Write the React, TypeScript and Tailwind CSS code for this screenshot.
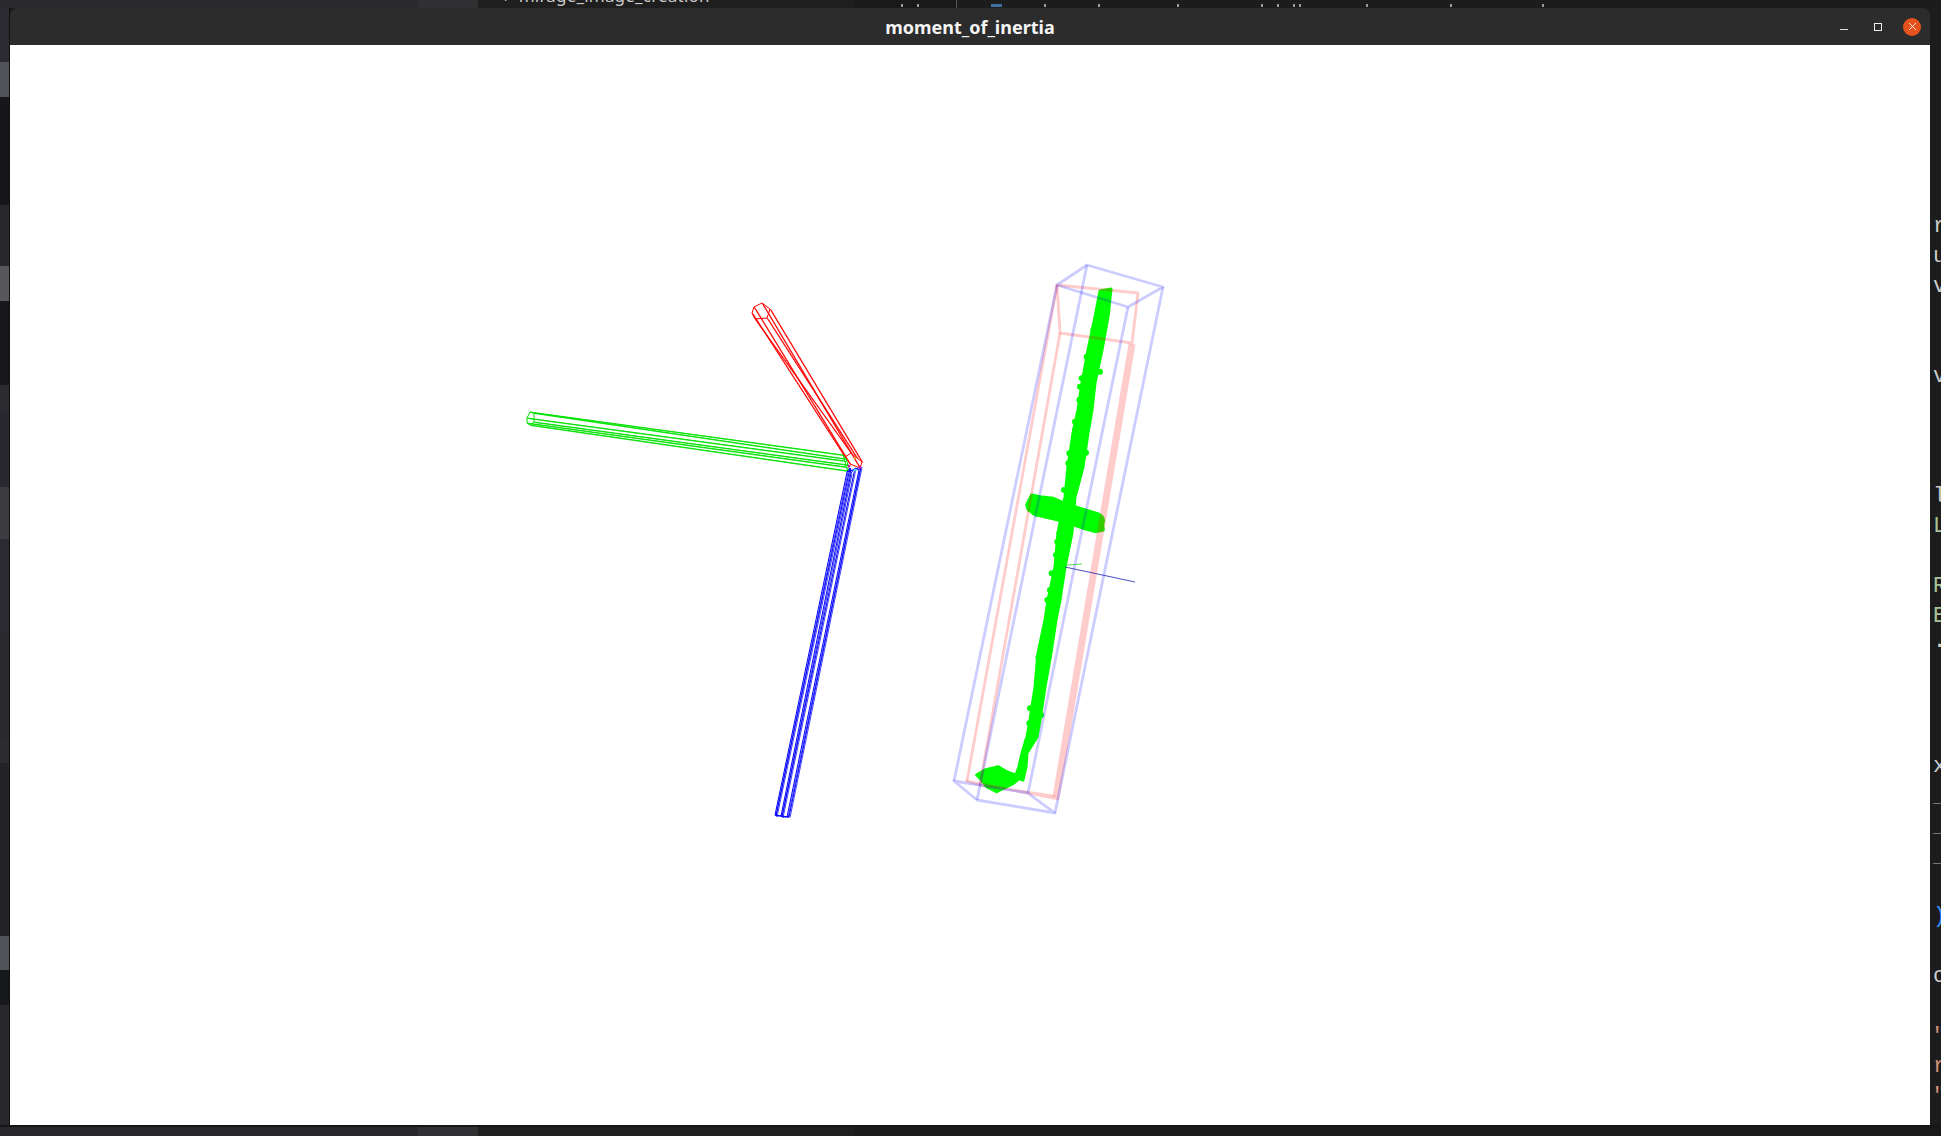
import { X } from "lucide-react";

type P = [number, number];
const at = (pts: P[], ox: number, oy: number): P[] => pts.map(([x, y]) => [x / 3 + ox, y / 3 + oy]);
const str = (pts: P[]) => pts.map((p) => p.join(",")).join(" ");

const redFar: P[] = [[752, 313], [754, 307], [762, 303], [770, 309], [767, 318], [755, 319]];
const redBase: P[] = [[845, 457], [850, 464], [860, 468], [862, 462], [857, 458], [851, 453]];
const greenFar: P[] = [[527, 418], [530, 412], [534, 413], [534, 422], [530, 425], [527, 423]];
const greenBase: P[] = [[845, 461], [843, 455], [846, 459], [848, 465], [848, 471], [846, 467]];
const blueFar: P[] = [[775, 815], [776, 816], [781, 816], [782, 817], [787, 817], [789, 817]];
const blueBase: P[] = [[847, 472], [850, 468], [851, 473], [855, 468], [859, 470], [861, 467]];

const leftEdge: P[] = [[1100, 291], [1095, 317], [1088, 350], [1082, 383], [1078, 410], [1073, 433], [1068, 467], [1065, 497], [1058, 533], [1055, 567], [1048, 600], [1045, 620], [1038, 653], [1035, 687], [1030, 720], [1027, 737], [1022, 753], [1019, 767], [1015, 777]];
const rightEdge: P[] = [[1111, 289], [1108, 317], [1102, 350], [1095, 383], [1092, 410], [1088, 433], [1083, 467], [1075, 497], [1072, 533], [1065, 567], [1060, 600], [1056, 620], [1051, 653], [1045, 687], [1040, 720], [1037, 737], [1027, 753], [1026, 767], [1023, 780]];
const stem = [...leftEdge, ...[...rightEdge].reverse()];
const cross = at([[260, 315], [275, 285], [300, 290], [340, 295], [375, 310], [405, 320], [470, 340], [485, 350], [490, 390], [465, 395], [430, 385], [395, 372], [355, 360], [290, 345], [265, 330]], 940, 400);
const blob = at([[110, 465], [135, 450], [175, 440], [200, 455], [225, 465], [245, 470], [220, 490], [190, 505], [170, 515], [140, 500], [125, 480]], 940, 620);
const bumps: P[] = [
  ...at([[405, 65], [405, 90], [388, 160], [385, 190], [372, 270], [358, 400], [352, 425], [348, 465], [335, 520], [330, 570], [322, 600], [438, 158]], 940, 400),
  ...at([[160, 240], [150, 300], [140, 320], [180, 365], [125, 385], [120, 410], [118, 450]], 1040, 250),
  ...at([[295, 112], [270, 265], [303, 285], [268, 310], [260, 365], [245, 425]], 940, 620),
];
const rounds: [number, number, number][] = [
  [1038, 508, 9],
  [1096, 521, 9],
  [999, 778, 10],
  [990, 776, 7],
];

const blueTop: P[] = [[1087, 265], [1163, 287], [1128, 307], [1057, 285]];
const blueBottom: P[] = [[977, 800], [1055, 813], [1028, 793], [954, 781]];
const redTop: P[] = [[1057, 285], [1138, 293], [1132, 343], [1060, 333]];
const redBottom: P[] = [[967, 781], [1058, 799], [1052, 796], [980, 785]];

function Prism({ far, base, color }: { far: P[]; base: P[]; color: string }) {
  return (
    <g stroke={color} strokeWidth="1" fill="none">
      <polygon points={str(far)} />
      <polygon points={str(base)} />
      {far.map((p, i) => (
        <g key={i}>
          <line x1={p[0]} y1={p[1]} x2={base[i][0]} y2={base[i][1]} />
          <line x1={p[0] + 1} y1={p[1] + 0.6} x2={base[i][0] + 1} y2={base[i][1] + 0.6} strokeOpacity="0.75" />
        </g>
      ))}
    </g>
  );
}

function BlueBox() {
  return (
    <g stroke="#0000ff" strokeOpacity="0.2" strokeWidth="2.8" fill="none" strokeLinejoin="round">
      <polygon points={str(blueTop)} />
      <polygon points={str(blueBottom)} />
      {blueTop.map((p, i) => (
        <line key={i} x1={p[0]} y1={p[1]} x2={blueBottom[i][0]} y2={blueBottom[i][1]} />
      ))}
    </g>
  );
}

function RedBox() {
  return (
    <g stroke="#ff0000" strokeOpacity="0.2" strokeWidth="2.8" fill="none" strokeLinejoin="round">
      <polygon points={str(redTop)} />
      <polygon points={str(redBottom)} />
      <line x1={redTop[0][0]} y1={redTop[0][1]} x2={redBottom[0][0]} y2={redBottom[0][1]} />
      <line x1={redTop[3][0]} y1={redTop[3][1]} x2={redBottom[3][0]} y2={redBottom[3][1]} />
      <line x1="1132" y1="344" x2="1056" y2="797" strokeWidth="7" />
    </g>
  );
}

function Scene() {
  return (
    <svg viewBox="10 45 1920 1080" className="block w-full h-full blur-[0.4px]">
      <Prism far={redFar} base={redBase} color="#ff0000" />
      <Prism far={greenFar} base={greenBase} color="#00e000" />
      <Prism far={blueFar} base={blueBase} color="#0000ff" />
      <circle cx="849" cy="466" r="1.5" fill="#d0109a" />
      <circle cx="860" cy="467" r="1.5" fill="#d0109a" />
      <circle cx="855" cy="470" r="1.5" fill="#50d0e0" />
      <circle cx="855" cy="458" r="1.2" fill="#e0a020" />

      <g fill="#00ff00" stroke="#00ff00" strokeWidth="3" strokeLinejoin="round">
        <polygon points={str(stem)} />
        <polygon points={str(cross)} />
        <polygon points={str(blob)} />
      </g>
      <g fill="#00ff00">
        {bumps.map((p, i) => (
          <circle key={i} cx={p[0]} cy={p[1]} r="3" />
        ))}
        {rounds.map(([x, y, r], i) => (
          <circle key={i} cx={x} cy={y} r={r} />
        ))}
      </g>

      <RedBox />
      <BlueBox />

      <line x1="1065" y1="567" x2="1135" y2="582" stroke="#2020b0" strokeWidth="0.8" />
      <line x1="1067" y1="565" x2="1082" y2="564" stroke="#30d030" strokeWidth="0.8" />
    </svg>
  );
}

function Mark({ className }: { className: string }) {
  return <span className={`h-[3px] w-[2px] bg-[#9a9a9a] mt-[4px] ${className}`} />;
}

function TopStrip() {
  return (
    <div className="col-span-3 flex overflow-hidden">
      <div className="w-[418px] bg-[#2a2a2e]" />
      <div className="w-[60px] bg-[#303032]" />
      <div className="w-[377px] bg-[#1e1e1e] pl-[26px] overflow-hidden">
        <div className="-mt-[12px] text-[17px] leading-[16px] tracking-[0.2px] text-[#cccccc] whitespace-pre font-['Noto_Sans',sans-serif]">›  mirage_image_creation</div>
      </div>
      <div className="w-[102px] flex bg-[#191919] border-r border-[#555555]">
        <Mark className="ml-[46px]" />
        <Mark className="ml-[14px]" />
      </div>
      <div className="flex-1 flex bg-[#1c1c1c]">
        <span className="ml-[34px] mt-[4px] h-[3px] w-[11px] bg-[#3f6f9f]" />
        <Mark className="ml-[42px]" />
        <Mark className="ml-[52px]" />
        <Mark className="ml-[77px]" />
        <Mark className="ml-[82px]" />
        <Mark className="ml-[14px]" />
        <Mark className="ml-[14px]" />
        <Mark className="ml-[4px]" />
        <Mark className="ml-[65px]" />
        <Mark className="ml-[82px]" />
        <Mark className="ml-[90px]" />
      </div>
    </div>
  );
}

function LeftStrip() {
  return (
    <div className="flex flex-col border-r border-[#111111]">
      <div className="h-[54px] bg-[#2a2a30]" />
      <div className="h-[35px] bg-[#50525a]" />
      <div className="h-[108px] bg-[#17171a]" />
      <div className="h-[61px] bg-[#28282c]" />
      <div className="h-[35px] bg-[#58585c]" />
      <div className="h-[84px] bg-[#18181b]" />
      <div className="h-[26px] bg-[#2c2c30]" />
      <div className="h-[76px] bg-[#28282e]" />
      <div className="h-[52px] bg-[#3c3c40]" />
      <div className="h-[97px] bg-[#2a2a30]" />
      <div className="h-[103px] bg-[#2a2a2e]" />
      <div className="h-[24px] bg-[#2c2c30]" />
      <div className="h-[173px] bg-[#242428]" />
      <div className="h-[34px] bg-[#50525a]" />
      <div className="h-[35px] bg-[#16181c]" />
      <div className="h-[76px] bg-[#28282c]" />
      <div className="flex-1 bg-[#28282c]" />
    </div>
  );
}

const rows: [string, string][] = [
  ["r", "text-[#cccccc]"],
  ["u", "text-[#cccccc]"],
  ["v", "text-[#cccccc]"],
  ["", ""],
  ["", ""],
  ["v", "text-[#cccccc]"],
  ["", ""],
  ["", ""],
  ["", ""],
  ["l", "text-[#cccccc]"],
  ["L", "text-[#a9c49a]"],
  ["", ""],
  ["R", "text-[#a9c49a]"],
  ["E", "text-[#a9c49a]"],
  ["·", "text-[#dddddd]"],
  ["", ""],
  ["", ""],
  ["", ""],
  ["x", "text-[#cccccc]"],
  ["_", "text-[#777777]"],
  ["_", "text-[#777777]"],
  ["_", "text-[#777777]"],
  ["", ""],
  [")", "text-[#3794ff]"],
  ["", ""],
  ["c", "text-[#cccccc]"],
  ["", ""],
  ['"', "text-[#ce9178]"],
  ["r", "text-[#ce9178]"],
  ['"', "text-[#ce9178]"],
];

function RightStrip() {
  return (
    <div className="bg-[#1c1c1c] overflow-hidden pt-[204px] pl-[3px] font-['Liberation_Mono',monospace] text-[22px] leading-[30px]">
      {rows.map(([t, c], i) => (
        <div key={i} className={`h-[30px] ${c}`}>{t}</div>
      ))}
    </div>
  );
}

function BottomStrip() {
  return (
    <div className="col-span-3 flex border-t-2 border-[#161616]">
      <div className="w-[418px] bg-[#28282c]" />
      <div className="w-[60px] bg-[#303032]" />
      <div className="w-[377px] bg-[#1e1e1e]" />
      <div className="flex-1 bg-[#191919]" />
    </div>
  );
}

function Window() {
  return (
    <div className="flex flex-col min-h-0">
      <div className="h-[37px] shrink-0 grid grid-cols-[1fr_auto_1fr] items-center bg-[#2c2c2c] rounded-t-lg">
        <div />
        <div className="text-[#f4f4f4] text-[18px] leading-[24px] font-bold font-['Noto_Sans',sans-serif]">moment_of_inertia</div>
        <div className="flex items-center justify-end pr-[9px]">
          <span className="w-[8px] h-[1px] mt-[5px] bg-[#dddddd]" />
          <span className="ml-[26px] w-[8px] h-[8px] border border-[#eeeeee]" />
          <span className="ml-[21px] w-[18px] h-[18px] rounded-full bg-[#e6521e] flex items-center justify-center">
            <X size={13} strokeWidth={1.5} color="#ffffff" />
          </span>
        </div>
      </div>
      <div className="flex-1 min-h-0 bg-white">
        <Scene />
      </div>
    </div>
  );
}

export default function App() {
  return (
    <div className="w-[1941px] h-[1136px] grid grid-cols-[10px_1920px_11px] grid-rows-[8px_1117px_11px] bg-[#1c1c1c] overflow-hidden">
      <TopStrip />
      <LeftStrip />
      <Window />
      <RightStrip />
      <BottomStrip />
    </div>
  );
}
